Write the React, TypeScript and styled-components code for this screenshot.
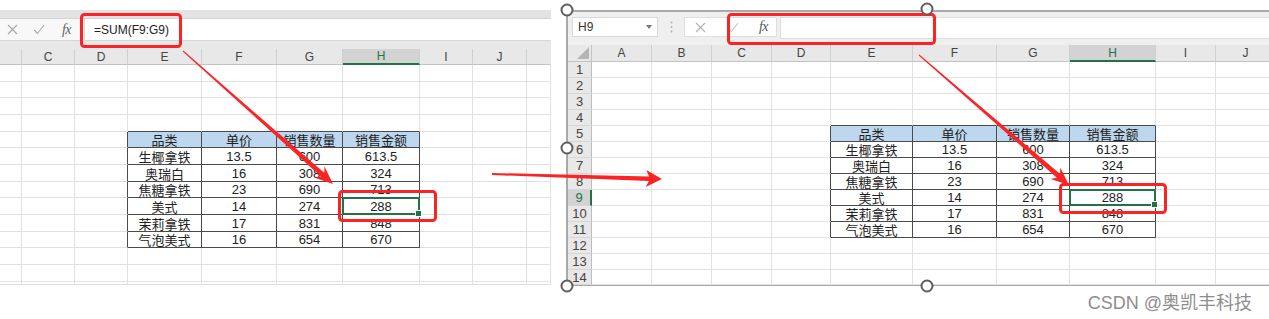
import React from 'react';
import styled, { createGlobalStyle } from 'styled-components';

const GlobalStyle = createGlobalStyle`
  html, body { margin: 0; padding: 0; background: #ffffff; }
  body {
    font-family: "Liberation Sans", "Noto Sans CJK SC", sans-serif;
    width: 1269px; height: 319px; overflow: hidden;
  }
`;

const GRID = '#e1e1e1';
const DARK = '#4a4a4a';
const GREEN = '#217346';
const HEAD_BG = '#e8e8e8';
const RED = '#fb2424';

const TABLE = [
  ['品类', '单价', '销售数量', '销售金额'],
  ['生椰拿铁', '13.5', '600', '613.5'],
  ['奥瑞白', '16', '308', '324'],
  ['焦糖拿铁', '23', '690', '713'],
  ['美式', '14', '274', '288'],
  ['茉莉拿铁', '17', '831', '848'],
  ['气泡美式', '16', '654', '670'],
];

const Page = styled.div`
  position: relative;
  width: 1269px;
  height: 319px;
  box-sizing: border-box;
  padding-top: 10px;
  display: flex;
  align-items: flex-start;
  gap: 15px;
  overflow: hidden;
`;

/* ---------- left panel ---------- */
const LeftPanel = styled.div`
  width: 551px;
  flex: none;
  display: flex;
  flex-direction: column;
  overflow: hidden;
`;

const RibbonBand = styled.div`
  height: 8px;
  background: #e3e3e3;
  border-bottom: 1px solid #d3d3d3;
`;

const FormulaRow = styled.div`
  height: 21px;
  background: #f8f8f8;
  border-bottom: 1px solid #d6d6d6;
  display: flex;
  align-items: stretch;
`;

const IconSlot = styled.div<{ $w: number }>`
  width: ${(p) => p.$w}px;
  flex: none;
  display: flex;
  align-items: center;
  justify-content: center;
`;

const Fx = styled.span<{ $color?: string }>`
  font-family: "Liberation Serif", "DejaVu Serif", serif;
  font-style: italic;
  font-size: 14px;
  color: ${(p) => p.$color || '#666'};
  letter-spacing: -0.5px;
`;

const FormulaInput = styled.div`
  flex: 1;
  margin-left: 4px;
  background: #ffffff;
  border-left: 1px solid #d6d6d6;
  display: flex;
  align-items: center;
  padding-left: 9px;
  font-size: 12px;
  color: #222;
`;

const HeaderGap = styled.div`
  height: 8px;
  background: ${HEAD_BG};
`;

/* ---------- right panel ---------- */
const RightPanel = styled.div`
  flex: none;
  width: 703px;
  border-top: 2px solid #a9a9a9;
  border-left: 2px solid #a9a9a9;
  border-bottom: 1px solid #a9a9a9;
  display: flex;
  flex-direction: column;
  overflow: hidden;
`;

const Toolbar = styled.div`
  height: 33px;
  box-sizing: border-box;
  background: #efefef;
  display: flex;
  align-items: flex-start;
  padding: 5px 0 0 4px;
`;

const NameBox = styled.div`
  width: 86px;
  height: 20px;
  box-sizing: border-box;
  background: #ffffff;
  border: 1px solid #d9d9d9;
  display: flex;
  align-items: center;
  justify-content: space-between;
  padding: 0 5px 0 5px;
  font-size: 12px;
  color: #333;
`;

const DotsSlot = styled.div`
  width: 26px;
  height: 20px;
  display: flex;
  align-items: center;
  justify-content: center;
`;

const ButtonBox = styled.div`
  width: 93px;
  height: 20px;
  box-sizing: border-box;
  background: #ffffff;
  border: 1px solid #dedede;
  display: flex;
  align-items: stretch;
`;

const ToolInput = styled.div`
  flex: 1;
  height: 20px;
  margin-left: 3px;
  background: #ffffff;
  border: 1px solid #dedede;
  border-right: none;
`;

/* ---------- sheet ---------- */
const SheetGrid = styled.div<{ $cols: string }>`
  display: grid;
  grid-template-columns: ${(p) => p.$cols};
`;

const ColHead = styled.div<{ $h: number; $sel?: boolean; $last?: boolean }>`
  height: ${(p) => p.$h}px;
  box-sizing: border-box;
  background: ${(p) => (p.$sel ? '#d3d3d3' : HEAD_BG)};
  border-right: 1px solid ${(p) => (p.$last ? 'transparent' : '#cfcfcf')};
  border-bottom: ${(p) => (p.$sel ? `2px solid ${GREEN}` : '1px solid #c3c3c3')};
  color: ${(p) => (p.$sel ? GREEN : '#444')};
  font-size: 12px;
  display: flex;
  align-items: center;
  justify-content: center;
`;

const Corner = styled.div<{ $h: number }>`
  height: ${(p) => p.$h}px;
  box-sizing: border-box;
  background: ${HEAD_BG};
  border-right: 1px solid #c3c3c3;
  border-bottom: 1px solid #c3c3c3;
  position: relative;
  &::after {
    content: '';
    position: absolute;
    right: 2px;
    bottom: 2px;
    width: 12px;
    height: 12px;
    background: #b5b5b5;
    clip-path: polygon(100% 0, 100% 100%, 0 100%);
  }
`;

const RowHead = styled.div<{ $h: number; $sel?: boolean }>`
  height: ${(p) => p.$h}px;
  box-sizing: border-box;
  background: ${(p) => (p.$sel ? '#d3d3d3' : HEAD_BG)};
  border-right: ${(p) => (p.$sel ? `2px solid ${GREEN}` : '1px solid #bdbdbd')};
  border-bottom: 1px solid #d6d6d6;
  color: ${(p) => (p.$sel ? GREEN : '#444')};
  font-size: 13px;
  display: flex;
  align-items: center;
  justify-content: center;
  overflow: hidden;
`;

const Cell = styled.div<{ $h: number; $r: string; $b: string; $fill?: string }>`
  position: relative;
  height: ${(p) => p.$h}px;
  box-sizing: border-box;
  background: ${(p) => p.$fill || '#ffffff'};
  border-right: 1px solid ${(p) => p.$r};
  border-bottom: 1px solid ${(p) => p.$b};
  font-size: 13px;
  color: #222;
  display: flex;
  align-items: center;
  justify-content: center;
  white-space: nowrap;
  overflow: visible;
`;

const SelBox = styled.div`
  position: absolute;
  z-index: 2;
  left: -1px;
  top: -1px;
  right: -1px;
  bottom: -1px;
  border: 2px solid ${GREEN};
  pointer-events: none;
  &::after {
    content: '';
    position: absolute;
    right: -4px;
    bottom: -4px;
    width: 5px;
    height: 5px;
    background: ${GREEN};
    border: 1px solid #fff;
  }
`;

/* ---------- overlay ---------- */
const Overlay = styled.svg`
  position: absolute;
  left: 0;
  top: 0;
  width: 1269px;
  height: 319px;
  pointer-events: none;
  z-index: 5;
`;

const Watermark = styled.div`
  position: absolute;
  right: 17px;
  top: 288px;
  z-index: 6;
  font-family: "Liberation Sans", "Noto Sans CJK SC", sans-serif;
  font-size: 18px;
  color: #8d8d8d;
  text-shadow: 0 0 1px #fff;
  white-space: nowrap;
`;

/* ---------- icons ---------- */
const XIcon: React.FC<{ color?: string }> = ({ color = '#a8a8a8' }) => (
  <svg width="11" height="11" viewBox="0 0 11 11">
    <path d="M1 1L10 10M10 1L1 10" stroke={color} strokeWidth="1.1" fill="none" />
  </svg>
);

const CheckIcon: React.FC<{ color?: string }> = ({ color = '#a8a8a8' }) => (
  <svg width="12" height="11" viewBox="0 0 12 11">
    <path d="M1 6L4.5 9.5L11 1" stroke={color} strokeWidth="1.1" fill="none" />
  </svg>
);

const Caret = () => (
  <svg width="6" height="4" viewBox="0 0 6 4">
    <path d="M0 0H6L3 4Z" fill="#777" />
  </svg>
);

const Dots = () => (
  <svg width="3" height="12" viewBox="0 0 3 12">
    <circle cx="1.5" cy="1.5" r="1" fill="#b0b0b0" />
    <circle cx="1.5" cy="6" r="1" fill="#b0b0b0" />
    <circle cx="1.5" cy="10.5" r="1" fill="#b0b0b0" />
  </svg>
);

/* ---------- sheet component ---------- */
type Col = { label: string; width: number; sel?: boolean };

interface SheetProps {
  cols: Col[];
  rowHeights: number[];
  headerHeight: number;
  rowHeader?: number;
  tableAt: { r: number; c: number };
  selAt: { r: number; c: number };
}

const Sheet: React.FC<SheetProps> = ({ cols, rowHeights, headerHeight, rowHeader, tableAt, selAt }) => {
  const inTable = (r: number, c: number) =>
    r >= tableAt.r && r < tableAt.r + TABLE.length && c >= tableAt.c && c < tableAt.c + 4;
  const template = [rowHeader ? `${rowHeader}px` : null, ...cols.map((c) => `${c.width}px`)]
    .filter(Boolean)
    .join(' ');

  return (
    <SheetGrid $cols={template}>
      {rowHeader ? <Corner $h={headerHeight} /> : null}
      {cols.map((c, i) => (
        <ColHead key={`h${i}`} $h={headerHeight} $sel={c.sel} $last={i === cols.length - 1}>
          {c.label}
        </ColHead>
      ))}
      {rowHeights.map((h, r) => (
        <React.Fragment key={`r${r}`}>
          {rowHeader ? (
            <RowHead $h={h} $sel={r === selAt.r}>
              {r + 1}
            </RowHead>
          ) : null}
          {cols.map((_, c) => {
            const t = inTable(r, c);
            const right = t || inTable(r, c + 1) ? DARK : GRID;
            const bottom = t || inTable(r + 1, c) ? DARK : GRID;
            const text = t ? TABLE[r - tableAt.r][c - tableAt.c] : '';
            const fill = t && r === tableAt.r ? '#bdd7ee' : undefined;
            return (
              <Cell key={`c${r}-${c}`} $h={h} $r={right} $b={bottom} $fill={fill}>
                {text}
                {r === selAt.r && c === selAt.c ? <SelBox /> : null}
              </Cell>
            );
          })}
        </React.Fragment>
      ))}
    </SheetGrid>
  );
};

/* ---------- annotations ---------- */
function arrow(
  x1: number, y1: number, x2: number, y2: number,
  w1: number, w2: number, headLen: number, headW: number, notch: number,
) {
  const dx = x2 - x1;
  const dy = y2 - y1;
  const L = Math.hypot(dx, dy);
  const ux = dx / L;
  const uy = dy / L;
  const nx = -uy;
  const ny = ux;
  const bx = x2 - ux * headLen;
  const by = y2 - uy * headLen;
  const jx = bx + ux * notch;
  const jy = by + uy * notch;
  const pts = [
    [x1 + (nx * w1) / 2, y1 + (ny * w1) / 2],
    [jx + (nx * w2) / 2, jy + (ny * w2) / 2],
    [bx + (nx * headW) / 2, by + (ny * headW) / 2],
    [x2, y2],
    [bx - (nx * headW) / 2, by - (ny * headW) / 2],
    [jx - (nx * w2) / 2, jy - (ny * w2) / 2],
    [x1 - (nx * w1) / 2, y1 - (ny * w1) / 2],
  ];
  return pts.map((p) => `${p[0].toFixed(1)},${p[1].toFixed(1)}`).join(' ');
}

const HANDLES: [number, number][] = [
  [567, 10],
  [927, 9],
  [567, 148],
  [567, 286],
  [927, 286],
];

const Annotations = () => (
  <Overlay viewBox="0 0 1269 319">
    <rect x="81.5" y="14.5" width="99" height="32" rx="3" fill="none" stroke={RED} strokeWidth="3" />
    <rect x="339.5" y="191.5" width="96" height="29" rx="3" fill="none" stroke={RED} strokeWidth="3" />
    <rect x="728.5" y="14.5" width="206" height="29" rx="3" fill="none" stroke={RED} strokeWidth="3" />
    <rect x="1060.5" y="184.5" width="105" height="28" rx="3" fill="none" stroke={RED} strokeWidth="3" />
    <polygon points={arrow(183, 51, 333, 184, 1, 5, 18, 15, 4)} fill={RED} />
    <polygon points={arrow(492, 174, 662, 179, 2, 4.5, 16, 17, 3)} fill={RED} />
    <polygon points={arrow(919, 55, 1069, 185, 1, 5, 18, 15, 4)} fill={RED} />
    {HANDLES.map(([x, y], i) => (
      <circle key={i} cx={x} cy={y} r="5.5" fill="#ffffff" stroke="#5e5e5e" strokeWidth="2" />
    ))}
  </Overlay>
);

/* ---------- data ---------- */
const LEFT_COLS: Col[] = [
  { label: '', width: 22 },
  { label: 'C', width: 53 },
  { label: 'D', width: 53 },
  { label: 'E', width: 74 },
  { label: 'F', width: 75 },
  { label: 'G', width: 66 },
  { label: 'H', width: 77, sel: true },
  { label: 'I', width: 53 },
  { label: 'J', width: 54 },
  { label: '', width: 24 },
];
const LEFT_ROWS = [17, 16, 17, 17, 16, 17, 17, 16, 17, 17, 16, 17, 17, 3];

const RIGHT_COLS: Col[] = [
  { label: 'A', width: 60 },
  { label: 'B', width: 60 },
  { label: 'C', width: 60 },
  { label: 'D', width: 59 },
  { label: 'E', width: 82 },
  { label: 'F', width: 84 },
  { label: 'G', width: 73 },
  { label: 'H', width: 86, sel: true },
  { label: 'I', width: 60 },
  { label: 'J', width: 60 },
];
const RIGHT_ROWS = [16, 16, 16, 16, 16, 16, 16, 16, 16, 16, 16, 16, 16, 15];

export default function App() {
  return (
    <>
      <GlobalStyle />
      <Page>
        <LeftPanel>
          <RibbonBand />
          <FormulaRow>
            <IconSlot $w={25}>
              <XIcon />
            </IconSlot>
            <IconSlot $w={28}>
              <CheckIcon />
            </IconSlot>
            <IconSlot $w={27}>
              <Fx>fx</Fx>
            </IconSlot>
            <FormulaInput>=SUM(F9:G9)</FormulaInput>
          </FormulaRow>
          <HeaderGap />
          <Sheet
            cols={LEFT_COLS}
            rowHeights={LEFT_ROWS}
            headerHeight={16}
            tableAt={{ r: 4, c: 3 }}
            selAt={{ r: 8, c: 6 }}
          />
        </LeftPanel>

        <RightPanel>
          <Toolbar>
            <NameBox>
              <span>H9</span>
              <Caret />
            </NameBox>
            <DotsSlot>
              <Dots />
            </DotsSlot>
            <ButtonBox>
              <IconSlot $w={30}>
                <XIcon color="#b0b0b0" />
              </IconSlot>
              <IconSlot $w={36}>
                <CheckIcon color="#c4c4c4" />
              </IconSlot>
              <IconSlot $w={25}>
                <Fx $color="#555">fx</Fx>
              </IconSlot>
            </ButtonBox>
            <ToolInput />
          </Toolbar>
          <Sheet
            cols={RIGHT_COLS}
            rowHeights={RIGHT_ROWS}
            headerHeight={17}
            rowHeader={24}
            tableAt={{ r: 4, c: 4 }}
            selAt={{ r: 8, c: 7 }}
          />
        </RightPanel>

        <Annotations />
        <Watermark>CSDN @奥凯丰科技</Watermark>
      </Page>
    </>
  );
}
